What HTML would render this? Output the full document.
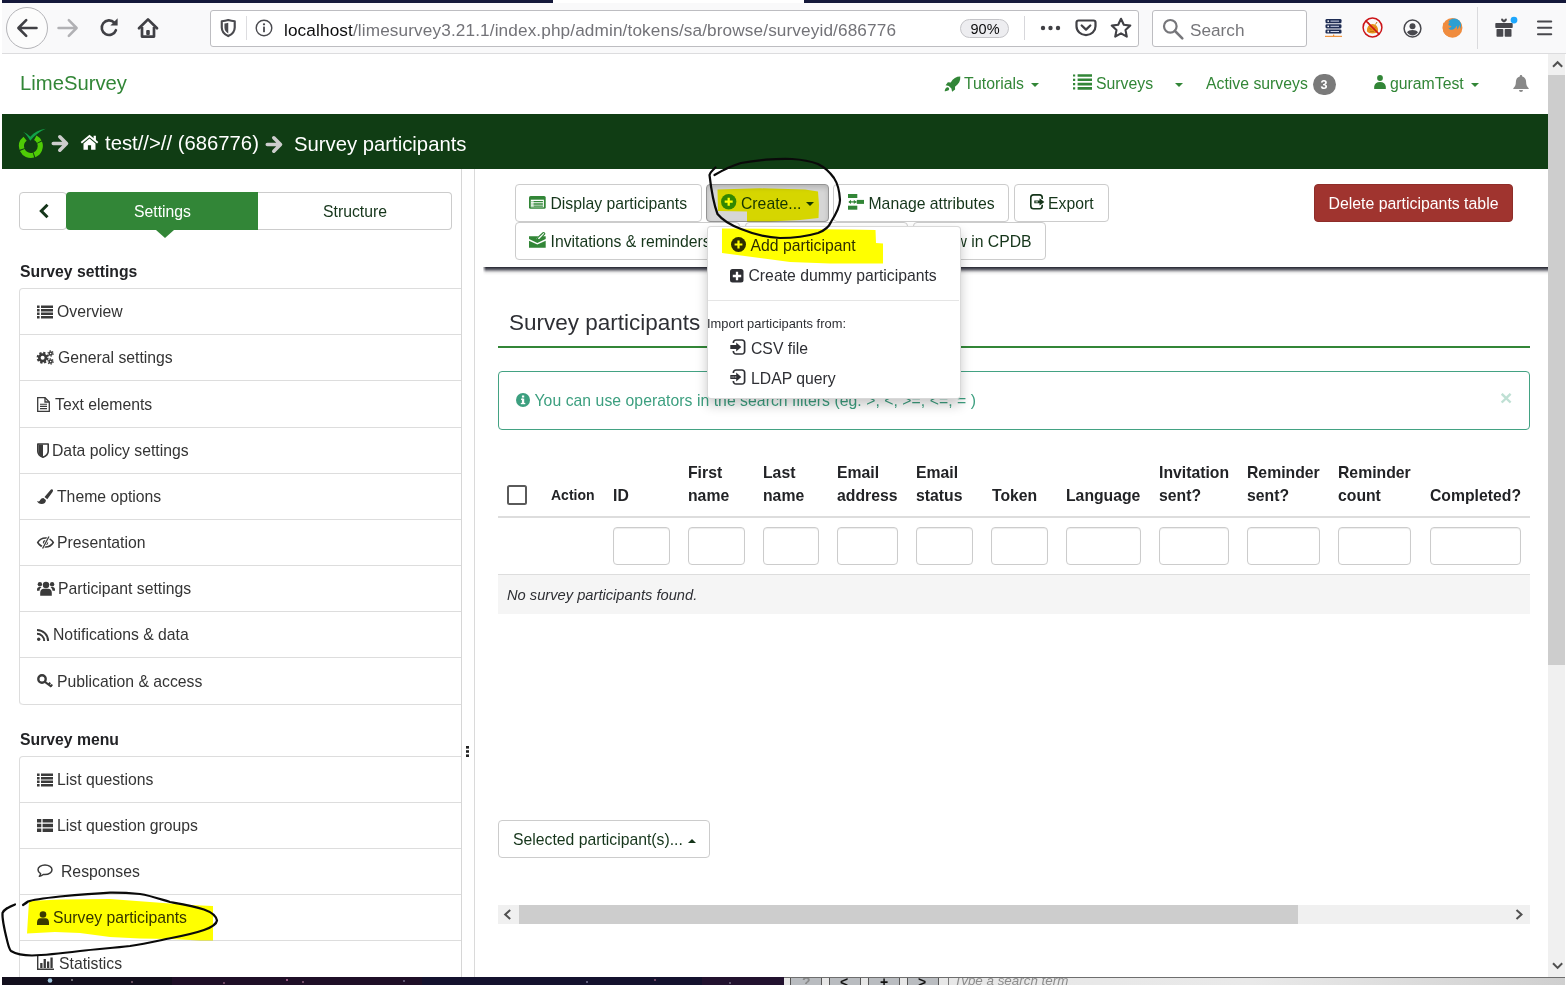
<!DOCTYPE html>
<html lang="en">
<head>
<meta charset="utf-8">
<title>LimeSurvey - Survey participants</title>
<style>
*{box-sizing:border-box;margin:0;padding:0}
html,body{width:1566px;height:986px;overflow:hidden;background:#fff}
body{font-family:"Liberation Sans",Arial,sans-serif;font-size:15.75px;color:#2b2d36;position:relative}
.abs{position:absolute}
svg{display:block;overflow:visible}
.t{position:absolute;white-space:nowrap;line-height:1}
/* browser chrome */
#tabstrip1{left:2px;top:0;width:551px;height:3px;background:#14183a}
#tabstrip2{left:804px;top:0;width:762px;height:3px;background:#14183a}
#toolbar{left:0;top:3px;width:1566px;height:51px;background:#f9f9fa;border-bottom:1px solid #dcdcde}
#urlbar{left:210px;top:10px;width:929px;height:37px;background:#fff;border:1px solid #bdbdc1;border-radius:3px}
#searchbar{left:1152px;top:10px;width:155px;height:37px;background:#fff;border:1px solid #bdbdc1;border-radius:3px}
.chrome-t{font-family:"Liberation Sans",sans-serif;font-size:17.2px}
/* page */
.green{color:#328637}
#greenbar{left:2px;top:114px;width:1546px;height:55px;background:#103d14}
.nav{font-size:15.8px;color:#328637}
.bc{font-size:20.3px;color:#fff}
/* sidebar */
#sidebar{left:2px;top:169px;width:460px;height:808px;background:#fff;border-right:1px solid #d6d6d6;overflow:hidden}
#handle{left:462px;top:169px;width:13px;height:808px;background:#fff;border-right:1px solid #dadada}
.lg{position:absolute;left:17px;width:460px;border:1px solid #ddd;border-bottom:0;border-radius:4px;background:#fff}
.li{position:relative;height:46.19px;border-bottom:1px solid #ddd;color:#343434}
.li:last-child{border-radius:0 0 0 4px}
.li .ic{position:absolute;left:17px;top:50%}
.li span{position:absolute;top:50%;margin-top:.5px;transform:translateY(-50%);white-space:nowrap;line-height:1}
.sh{position:absolute;left:18px;font-weight:700;font-size:15.75px;color:#222326;line-height:1;white-space:nowrap}
/* buttons */
.btn{position:absolute;height:38px;border:1px solid #ccc;border-radius:4px;background:#fff;color:#15351a;white-space:nowrap;font-size:15.75px;line-height:1}
.btn span{position:absolute;top:50%;transform:translateY(-50%);line-height:1}
/* table */
.th{position:absolute;font-weight:700;font-size:15.75px;line-height:23px;color:#222326;white-space:nowrap}
.fi{position:absolute;top:527px;height:38px;border:1px solid #ccc;border-radius:4px;background:#fff;box-shadow:inset 0 1px 1px rgba(0,0,0,.075)}
</style>
</head>
<body>
<!-- ===== BROWSER CHROME ===== -->
<div class="abs" id="tabstrip1"></div>
<div class="abs" id="tabstrip2"></div>
<div class="abs" id="toolbar"></div>
<div class="abs" id="urlbar"></div>
<div class="abs" id="searchbar"></div>
<!-- back -->
<div class="abs" style="left:6px;top:7px;width:42px;height:42px;border:1px solid #b4b4b8;border-radius:50%;background:#fcfcfc"></div>
<svg class="abs" style="left:16px;top:18px" width="22" height="20" viewBox="0 0 22 20"><path d="M20.5 10H2.5M10.2 2.2L2.4 10l7.8 7.8" fill="none" stroke="#404045" stroke-width="2.600" stroke-linecap="round" stroke-linejoin="round"/></svg>
<!-- forward -->
<svg class="abs" style="left:57px;top:18px" width="22" height="20" viewBox="0 0 22 20"><path d="M1.5 10h18M11.8 2.2l7.8 7.8-7.8 7.8" fill="none" stroke="#b1b1b4" stroke-width="2.500" stroke-linecap="round" stroke-linejoin="round"/></svg>
<!-- reload -->
<svg class="abs" style="left:99px;top:17px" width="21" height="21" viewBox="0 0 21 21"><path d="M16.9 13.2a7.3 7.3 0 1 1-1.6-7.6" fill="none" stroke="#404045" stroke-width="2.600" stroke-linecap="round"/><path d="M18.600 1.200v7.200h-7.200z" fill="#404045"/></svg>
<!-- home -->
<svg class="abs" style="left:137px;top:17px" width="22" height="22" viewBox="0 0 22 22"><path d="M2 11.2L11 2.4l9 8.8" fill="none" stroke="#404045" stroke-width="2.700" stroke-linecap="round" stroke-linejoin="round"/><path d="M5 10v9.600h12V10" fill="none" stroke="#404045" stroke-width="2.700" stroke-linejoin="round"/><rect x="9.2" y="13" width="3.6" height="5" rx="1" fill="#404045"/></svg>
<!-- shield -->
<svg class="abs" style="left:220px;top:19px" width="16.500" height="18.500" viewBox="0 0 15 18"><path d="M1.2 2.2c2.3-.2 4.4-.6 6.3-1.2 1.900.6 4 1 6.300 1.200v6c0 4-2.600 6.700-6.300 8.400C3.800 14.900 1.200 12.200 1.200 8.200z" fill="none" stroke="#4a4a4f" stroke-width="2.100" stroke-linejoin="round"/><path d="M7.500 3.600v10.400c-2.100-1.300-3.700-3-3.700-5.800V4.300c1.300-.1 2.500-.4 3.700-.7z" fill="#4a4a4f"/></svg>
<div class="abs" style="left:246px;top:16px;width:1px;height:24px;background:#dddde0"></div>
<!-- info -->
<svg class="abs" style="left:255px;top:19px" width="18" height="18" viewBox="0 0 18 18"><circle cx="9" cy="9" r="7.800" fill="none" stroke="#4a4a4f" stroke-width="1.400"/><rect x="8.100" y="7.600" width="1.800" height="5.600" fill="#4a4a4f"/><circle cx="9" cy="5.300" r="1.150" fill="#4a4a4f"/></svg>
<div class="t chrome-t" style="left:284px;top:21.500px;color:#0c0c0d;letter-spacing:.123px">localhost<span style="color:#737378">/limesurvey3.21.1/index.php/admin/tokens/sa/browse/surveyid/686776</span></div>
<!-- zoom pill -->
<div class="abs" style="left:960px;top:19px;width:49px;height:19px;border:1px solid #c4c4c8;border-radius:10px;background:#ededf0"></div>
<div class="t" style="left:970.500px;top:22px;font-size:14.500px;color:#0c0c0d">90%</div>
<div class="abs" style="left:1024px;top:16px;width:1px;height:24px;background:#d7d7db"></div>
<!-- dots -->
<svg class="abs" style="left:1040px;top:25px" width="21" height="6" viewBox="0 0 21 6"><circle cx="3" cy="3" r="2.200" fill="#404045"/><circle cx="10.500" cy="3" r="2.200" fill="#404045"/><circle cx="18" cy="3" r="2.200" fill="#404045"/></svg>
<!-- pocket -->
<svg class="abs" style="left:1075px;top:19.300px" width="22" height="18" viewBox="0 0 22 18"><path d="M3.500 1.500h15a2 2 0 0 1 2 2v3.800a9.500 8.800 0 0 1-19 0V3.500a2 2 0 0 1 2-2z" fill="none" stroke="#404045" stroke-width="2.200"/><path d="M6.700 6.500l4.300 4.100 4.300-4.100" fill="none" stroke="#404045" stroke-width="2.300" stroke-linecap="round" stroke-linejoin="round"/></svg>
<!-- star -->
<svg class="abs" style="left:1110px;top:17px" width="22" height="22" viewBox="0 0 22 22"><path d="M11 1.800l2.800 6 6.500.800-4.800 4.500 1.300 6.500L11 16.400l-5.800 3.200 1.300-6.500L1.700 8.600l6.500-.8z" fill="none" stroke="#404045" stroke-width="2.100" stroke-linejoin="round"/></svg>
<!-- search -->
<svg class="abs" style="left:1162px;top:18px" width="22" height="22" viewBox="0 0 22 22"><circle cx="8.300" cy="8.300" r="6.300" fill="none" stroke="#76767a" stroke-width="2.200"/><path d="M13 13l7.300 7.300" stroke="#76767a" stroke-width="2.600" stroke-linecap="round"/></svg>
<div class="t chrome-t" style="left:1190px;top:21.500px;color:#76767a">Search</div>
<!-- ext: server -->
<svg class="abs" style="left:1325px;top:18px" width="17" height="20" viewBox="0 0 17 20"><rect x=".5" y="1" width="16" height="4.200" rx="1.300" fill="#1f2d54"/><rect x=".5" y="6.200" width="16" height="4.200" rx="1.300" fill="#1f2d54"/><rect x=".5" y="11.400" width="16" height="4.200" rx="1.300" fill="#1f2d54"/><circle cx="3.200" cy="3.100" r=".9" fill="#fff"/><circle cx="3.200" cy="8.300" r=".9" fill="#fff"/><circle cx="3.200" cy="13.500" r=".9" fill="#fff"/><rect x="5.500" y="2.600" width="8.500" height="1" fill="#cfd6ea"/><rect x="5.500" y="7.800" width="8.500" height="1" fill="#cfd6ea"/><rect x="5.500" y="13" width="8.500" height="1" fill="#cfd6ea"/><rect x="0" y="17.800" width="17" height="1.100" fill="#f08a2c"/><rect x="8" y="16.600" width="1.200" height="1.500" fill="#f08a2c"/></svg>
<!-- ext: no-sign -->
<svg class="abs" style="left:1362.200px;top:17px" width="21" height="21" viewBox="0 0 21 21"><path d="M5 14.500c-.5-4.500 2-7.500 5.500-7.500s6 3 5.500 7.500c-1 1.300-3 2-5.500 2s-4.500-.7-5.500-2z" fill="#e8921c"/><path d="M7.500 7.500L6 5M13.500 7.500L15 5" stroke="#c9780f" stroke-width="1"/><path d="M7.500 11.500l2 1M13.500 10.500l-2 1.500M8 14.500h4" stroke="#b86c0c" stroke-width=".8" fill="none"/><circle cx="10.500" cy="10.500" r="9.400" fill="none" stroke="#cc1418" stroke-width="1.500"/><path d="M3.900 3.900l13.200 13.200" stroke="#cc1418" stroke-width="1.500"/></svg>
<!-- ext: account -->
<svg class="abs" style="left:1403px;top:18.600px" width="19" height="19" viewBox="0 0 19 19"><circle cx="9.500" cy="9.500" r="8.400" fill="none" stroke="#48484d" stroke-width="1.500"/><circle cx="9.500" cy="7.300" r="3" fill="#48484d"/><path d="M4 13.300c1.100-1.500 3-2.300 5.500-2.300s4.400.8 5.500 2.300c-1.300 2-3.200 3.100-5.500 3.100S5.300 15.300 4 13.300z" fill="#48484d"/></svg>
<!-- ext: firefox -->
<svg class="abs" style="left:1442.300px;top:16.800px" width="21" height="21" viewBox="0 0 21 21"><circle cx="10.500" cy="10.800" r="9.900" fill="#f08c3e"/><circle cx="12.300" cy="8.300" r="6.800" fill="#2c9fd2"/><path d="M1.500 5.500c.8.300 1.500 1 2 1.800 1.500-1.800 3-2.300 4.500-2-1.300.8-1.800 1.800-1.500 3 1 .500 2.300.3 3 1.300-.8 1.200-2 1.500-3.300 1.200.8 1.800 2.800 2.500 5 1.700 1.700-.7 2.800-2 3.200-3.700.8 1 .8 2.500.3 4 1.500-1 2.500-2.800 2.500-5 1.700 3 1.200 7-1.200 9.500-3 3-7.500 3.600-11 1.500C1 16.300-.3 11 1.500 5.500z" fill="#f08c3e"/></svg>
<div class="abs" style="left:1477px;top:7px;width:1px;height:42px;background:#dadadd"></div>
<!-- gift -->
<svg class="abs" style="left:1495px;top:16px" width="24" height="22" viewBox="0 0 24 22"><rect x=".3" y="7" width="17.400" height="5.100" rx=".8" fill="#48484d"/><rect x="1.500" y="13" width="6.800" height="7.700" rx=".8" fill="#48484d"/><rect x="9.700" y="13" width="6.800" height="7.700" rx=".8" fill="#48484d"/><path d="M9 6.600C6.800 5.500 5.500 4 6.300 3s2.200 0 2.700 1.500C9.500 3 11 2 11.700 3s-.5 2.500-2.700 3.600z" fill="#48484d"/><circle cx="19" cy="4.100" r="3.400" fill="#1ea7fd"/></svg>
<!-- hamburger -->
<svg class="abs" style="left:1535.500px;top:19px" width="17" height="18" viewBox="0 0 17 18"><path d="M2 2.500h13.200M2 8.800h13.200M2 15.200h13.200" stroke="#48484d" stroke-width="2.100" stroke-linecap="round"/></svg>

<div class="abs" id="leftedge" style="left:0;top:0;width:2px;height:986px;background:#fff"></div>

<!-- ===== PAGE HEADER ===== -->
<div class="t" style="left:20px;top:73px;font-size:20.25px;color:#328637">LimeSurvey</div>
<!-- Tutorials -->
<svg class="abs" style="left:944px;top:76px" width="17" height="16" viewBox="0 0 17 16"><path d="M16.300.500c.300 4.300-1.400 7.600-5.300 10.200l.100 2.800-3 2.300-.7-3.200-2.600-2.600-3.200-.7L3.900 6.300l2.800.1C9.200 2.300 12.200.500 16.300.500zM2.600 11.600c1-.6 2-.2 2.400.6.400.9 0 1.800-1 2.400-.8.500-2.300.7-3.300.7.100-1.100.500-2.700 1.900-3.700z" fill="#328637"/></svg>
<div class="t nav" style="left:964px;top:76px">Tutorials</div>
<svg class="abs" style="left:1031px;top:83px" width="8" height="4" viewBox="0 0 8 4"><path d="M0 0h8L4 4z" fill="#328637"/></svg>
<!-- Surveys -->
<svg class="abs" style="left:1072.800px;top:73.800px" width="19" height="16" viewBox="0 0 19 16"><path d="M0 .4h2.200v2.200H0zM4.600 .2H19v2.600H4.600zM0 4.700h2.200v2.200H0zM4.600 4.500H19v2.600H4.600zM0 9h2.200v2.200H0zM4.600 8.800H19v2.600H4.600zM0 13.300h2.200v2.200H0zM4.600 13.100H19v2.600H4.600z" fill="#328637"/></svg>
<div class="t nav" style="left:1096px;top:76px">Surveys</div>
<svg class="abs" style="left:1175px;top:83px" width="8" height="4" viewBox="0 0 8 4"><path d="M0 0h8L4 4z" fill="#328637"/></svg>
<div class="t nav" style="left:1206px;top:76px">Active surveys</div>
<div class="abs" style="left:1313px;top:73.800px;width:23.300px;height:21.200px;border-radius:10.600px;background:#7a7a7a"></div>
<div class="t" style="left:1320.500px;top:78.500px;font-size:12.600px;font-weight:700;color:#fff">3</div>
<!-- user -->
<svg class="abs" style="left:1373.500px;top:75px" width="12" height="14" viewBox="0 0 12 14"><circle cx="6" cy="3" r="2.900" fill="#328637"/><path d="M.2 14c0-.5-.1-1.300 0-2.400C.5 8.800 2.600 7 6 7s5.500 1.800 5.800 4.600c.1 1.100 0 1.900 0 2.400z" fill="#328637"/></svg>
<div class="t nav" style="left:1390px;top:76px">guramTest</div>
<svg class="abs" style="left:1471px;top:83px" width="8" height="4" viewBox="0 0 8 4"><path d="M0 0h8L4 4z" fill="#328637"/></svg>
<!-- bell -->
<svg class="abs" style="left:1513px;top:75px" width="16" height="17" viewBox="0 0 16 17"><path d="M8 0c.7 0 1.200.5 1.200 1.200v.4c2.400.6 3.900 2.600 3.900 5.200 0 3.500 1 5 2.600 6.400v.9H.3v-.9C1.900 11.800 2.900 10.300 2.900 6.800c0-2.600 1.500-4.600 3.900-5.200v-.4C6.800.5 7.300 0 8 0zM6 15h4a2 2 0 0 1-4 0z" fill="#888"/></svg>
<!-- green bar -->
<div class="abs" id="greenbar"></div>
<!-- logo -->
<svg class="abs" style="left:18px;top:127px" width="30" height="32" viewBox="0 0 30 32"><path d="M17.3 10.8A9.400 9.400 0 0 1 21.200 14.690M21.62 15.58A9.4 9.4 0 0 1 16.42 27.82M15.49 28.14A9.400 9.400 0 0 1 4.310 22.920M3.960 22A9.400 9.400 0 0 1 7.100 11.700" fill="none" stroke="#4fcb06" stroke-width="5.100"/><path d="M5 4.700c2.600 1.200 5 2.700 7.300 5C16 5.500 21 2.800 27.800 1.800 21.500 4.500 16 9 12.300 13.800 10.300 10 8 7 5 4.700z" fill="#12a149"/></svg>
<svg class="abs" style="left:51px;top:134px" width="19" height="19" viewBox="0 0 19 19"><path d="M2.300 9.500h12M8.800 2.800l6.700 6.700-6.700 6.700" fill="none" stroke="#cdcdcd" stroke-width="3.600" stroke-linecap="round" stroke-linejoin="round"/></svg>
<!-- home -->
<svg class="abs" style="left:80px;top:134px" width="19" height="17" viewBox="0 0 19 17"><path d="M1.300 8.700L9.500 1.900l8.200 6.800" fill="none" stroke="#fff" stroke-width="1.900" stroke-linejoin="miter"/><path d="M13.600 1.800h2.300v5l-2.300-2z" fill="#fff"/><path d="M9.500 4.400l6 5v6.400h-4.400v-4.500H7.900v4.500H3.500V9.400z" fill="#fff"/></svg>
<div class="t bc" style="left:105px;top:132.500px">test//&gt;// (686776)</div>
<svg class="abs" style="left:265px;top:135px" width="19" height="19" viewBox="0 0 19 19"><path d="M2.300 9.500h12M8.800 2.800l6.700 6.700-6.700 6.700" fill="none" stroke="#cdcdcd" stroke-width="3.600" stroke-linecap="round" stroke-linejoin="round"/></svg>
<div class="t bc" style="left:294px;top:133.500px">Survey participants</div>


<!-- ===== SIDEBAR ===== -->
<div class="abs" id="sidebar">
<div class="abs" style="left:17px;top:23px;width:48px;height:38px;border:1px solid #ccc;border-radius:4px;background:#fff"></div>
<svg class="abs" style="left:35.500px;top:34px" width="12" height="16" viewBox="0 0 12 16"><path d="M9.500 1.800L3.300 8l6.200 6.200" fill="none" stroke="#15351a" stroke-width="3"/></svg>
<div class="abs" style="left:256px;top:23px;width:194px;height:38px;border:1px solid #ccc;border-left:0;border-radius:0 4px 4px 0;background:#fff"></div>
<div class="abs" style="left:64px;top:23px;width:192px;height:38px;background:#328637;border-radius:4px 0 0 4px"></div>
<svg class="abs" style="left:154px;top:61px" width="18" height="8" viewBox="0 0 18 8"><path d="M0 0h18L9 8z" fill="#328637"/></svg>
<div class="t" style="left:132px;top:35px;color:#fff;font-size:15.75px">Settings</div>
<div class="t" style="left:321px;top:35px;color:#15351a;font-size:15.75px">Structure</div>
<div class="sh" style="top:95px">Survey settings</div>
<div class="lg" style="top:119px"><div class="li" style="height:46px"><div class="ic" style="left:17px;margin-top:-7px"><svg width="16" height="14" viewBox="0 0 16 14"><path d="M0 .6h2.600v2.300H0zM4 .6h12v2.300H4zM0 4.100h2.600v2.300H0zM4 4.100h12v2.300H4zM0 7.600h2.600v2.300H0zM4 7.600h12v2.300H4zM0 11.100h2.600v2.300H0zM4 11.100h12v2.300H4z" fill="#3a3a3a"/></svg></div><span style="left:37px">Overview</span></div><div class="li" style="height:46px"><div class="ic" style="left:17px;margin-top:-7.5px"><svg width="17" height="15" viewBox="0 0 17 15"><circle cx="5.600" cy="7.800" r="3.300" fill="none" stroke="#3a3a3a" stroke-width="2.600"/><circle cx="5.600" cy="7.800" r="5" fill="none" stroke="#3a3a3a" stroke-width="2" stroke-dasharray="2.200 1.730"/><circle cx="13.600" cy="3.500" r="1.500" fill="none" stroke="#3a3a3a" stroke-width="1.500"/><circle cx="13.600" cy="3.500" r="2.600" fill="none" stroke="#3a3a3a" stroke-width="1.200" stroke-dasharray="1.300 1.420"/><circle cx="13.600" cy="11.500" r="1.500" fill="none" stroke="#3a3a3a" stroke-width="1.500"/><circle cx="13.600" cy="11.500" r="2.600" fill="none" stroke="#3a3a3a" stroke-width="1.200" stroke-dasharray="1.300 1.420"/></svg></div><span style="left:38px">General settings</span></div><div class="li" style="height:47px"><div class="ic" style="left:17px;margin-top:-7.5px"><svg width="13" height="15" viewBox="0 0 13 15"><path d="M.7.700h7.300l4.300 4.300v9.300H.7z" fill="none" stroke="#3a3a3a" stroke-width="1.300"/><path d="M8 .7v4.300h4.300" fill="none" stroke="#3a3a3a" stroke-width="1.300"/><path d="M3 7.200h7M3 9.400h7M3 11.600h7" stroke="#3a3a3a" stroke-width="1.100"/></svg></div><span style="left:35px">Text elements</span></div><div class="li" style="height:46px"><div class="ic" style="left:17px;margin-top:-7.5px"><svg width="12" height="15" viewBox="0 0 12 15"><path d="M.8 1h10.400v7.200c0 3-2.400 4.900-5.200 6.100C3.200 13.100.8 11.200.8 8.200z" fill="none" stroke="#3a3a3a" stroke-width="1.600" stroke-linejoin="round"/><path d="M6 1.500v12.300C3.500 12.700 1.500 11 1.500 8.200V1.500z" fill="#3a3a3a"/></svg></div><span style="left:32px">Data policy settings</span></div><div class="li" style="height:46px"><div class="ic" style="left:17px;margin-top:-7.5px"><svg width="16" height="15" viewBox="0 0 16 15"><path d="M14.700.2c.8 0 1.300.6 1.300 1.300 0 .5-.2.900-.5 1.400L10.300 10.200 7.500 8 13.500.9c.3-.4.700-.7 1.200-.7zM6.400 8.900l2.500 2c.1 2.400-1.700 4-4.300 4C2.400 14.900.8 14 0 11.900c.5.300 1.100.5 1.600.5C3.300 12.400 3 9 6.400 8.900z" fill="#3a3a3a"/></svg></div><span style="left:37px">Theme options</span></div><div class="li" style="height:46px"><div class="ic" style="left:17px;margin-top:-6.5px"><svg width="17" height="13" viewBox="0 0 17 13"><path d="M.7 6.500C2.500 3.500 5.200 2 8.500 2s6 1.500 7.800 4.500C14.500 9.500 11.800 11 8.500 11S2.500 9.500.7 6.500z" fill="none" stroke="#3a3a3a" stroke-width="1.500"/><circle cx="8.500" cy="6.500" r="2.600" fill="#3a3a3a"/><path d="M12.300.4L5.300 12.600" stroke="#fff" stroke-width="3"/><path d="M12 .5L5.600 12.500" stroke="#3a3a3a" stroke-width="1.300"/></svg></div><span style="left:37px">Presentation</span></div><div class="li" style="height:46px"><div class="ic" style="left:17px;margin-top:-7.5px"><svg width="18" height="15" viewBox="0 0 18 15"><circle cx="9" cy="4" r="3.200" fill="#3a3a3a"/><path d="M3.200 14.800v-3c0-2.500 1.600-4 3.600-4h4.400c2 0 3.600 1.500 3.600 4v3z" fill="#3a3a3a"/><circle cx="2.900" cy="3.300" r="2.200" fill="#3a3a3a"/><circle cx="15.100" cy="3.300" r="2.200" fill="#3a3a3a"/><path d="M0 9.800V8.500c0-1.600 1-2.600 2.300-2.600h2.200c-.9.900-1.900 2-2 3.900zM18 9.800V8.500c0-1.600-1-2.600-2.300-2.600h-2.200c.9.900 1.900 2 2 3.900z" fill="#3a3a3a"/></svg></div><span style="left:38px">Participant settings</span></div><div class="li" style="height:46px"><div class="ic" style="left:17px;margin-top:-5.5px"><svg width="12" height="12" viewBox="0 0 12 12"><circle cx="1.700" cy="10.300" r="1.700" fill="#3a3a3a"/><path d="M0 4.800a7.200 7.200 0 0 1 7.200 7.200M0 .9A11.100 11.100 0 0 1 11.100 12" fill="none" stroke="#3a3a3a" stroke-width="2"/></svg></div><span style="left:33px">Notifications &amp; data</span></div><div class="li" style="height:47px"><div class="ic" style="left:17px;margin-top:-7px"><svg width="16" height="14" viewBox="0 0 16 14"><circle cx="5" cy="5" r="3.700" fill="none" stroke="#3a3a3a" stroke-width="2.400"/><path d="M7.600 7.600l6.800 5.200M11.600 10.600l1.600-2M13.800 12.300l1.400-1.800" fill="none" stroke="#3a3a3a" stroke-width="2"/></svg></div><span style="left:37px">Publication &amp; access</span></div></div>
<div class="sh" style="top:562.500px">Survey menu</div>
<div class="lg" style="top:587px"><div class="li" style="height:46px"><div class="ic" style="left:17px;margin-top:-7px"><svg width="16" height="14" viewBox="0 0 16 14"><path d="M0 .6h2.600v2.300H0zM4 .6h12v2.300H4zM0 4.100h2.600v2.300H0zM4 4.100h12v2.300H4zM0 7.600h2.600v2.300H0zM4 7.600h12v2.300H4zM0 11.100h2.600v2.300H0zM4 11.100h12v2.300H4z" fill="#3a3a3a"/></svg></div><span style="left:37px">List questions</span></div><div class="li" style="height:46px"><div class="ic" style="left:17px;margin-top:-6.5px"><svg width="16" height="13" viewBox="0 0 16 13"><path d="M0 0h4.300v3.500H0zM5.600 0H16v3.500H5.600zM0 4.700h4.300v3.500H0zM5.600 4.700H16v3.500H5.600zM0 9.400h4.300v3.500H0zM5.600 9.400H16v3.500H5.600z" fill="#3a3a3a"/></svg></div><span style="left:37px">List question groups</span></div><div class="li" style="height:46px"><div class="ic" style="left:17px;margin-top:-7.5px"><svg width="16" height="14" viewBox="0 0 16 14"><path d="M8 1c3.900 0 7 2.100 7 4.800s-3.100 4.800-7 4.800c-.6 0-1.200 0-1.700-.1-1 .9-2.300 1.600-3.900 1.800.7-.8 1.100-1.600 1.200-2.600C2 8.800 1 7.400 1 5.800 1 3.100 4.100 1 8 1z" fill="none" stroke="#3a3a3a" stroke-width="1.500" stroke-linejoin="round"/></svg></div><span style="left:41px">Responses</span></div><div class="li" style="height:46px"><div class="ic" style="left:17px;margin-top:-7px"><svg width="12" height="14" viewBox="0 0 12 14"><circle cx="6" cy="3.500" r="3.300" fill="#3a3a3a"/><path d="M0 14v-2.500c0-2.800 1.500-4.300 3.300-4.300h5.400c1.800 0 3.300 1.500 3.300 4.300V14z" fill="#3a3a3a"/></svg></div><span style="left:33px">Survey participants</span></div><div class="li" style="height:46px"><div class="ic" style="left:17px;margin-top:-7.5px"><svg width="17" height="14" viewBox="0 0 17 14"><path d="M.7 0v13.300H17" fill="none" stroke="#3a3a3a" stroke-width="1.400"/><path d="M3.200 7h2.300v5H3.200zM6.600 3h2.300v9H6.600zM10 5.500h2.300V12H10zM13.400 1.500h2.300V12h-2.300z" fill="#3a3a3a"/></svg></div><span style="left:39px">Statistics</span></div></div>
</div>
<div class="abs" id="handle"></div>
<svg class="abs" style="left:466px;top:746px" width="3" height="11" viewBox="0 0 3 11"><rect x="0" y="0" width="3" height="2.600" fill="#222"/><rect x="0" y="4.200" width="3" height="2.600" fill="#222"/><rect x="0" y="8.400" width="3" height="2.600" fill="#222"/></svg>


<!-- ===== MAIN ===== -->
<!-- menubar -->
<div class="abs" style="left:483px;top:267px;width:1065px;height:8px;background:linear-gradient(to bottom,#30313b 0px 1px,#4a4b55 1px 2px,#696a73 2px 3px,#99999f 3px 4px,#c4c4c7 4px 5px,#e5e5e6 5px 6px,#f5f5f5 6px 7px,#fbfbfb 7px 8px)"></div><div class="abs" style="left:481px;top:266px;width:5px;height:10px;background:linear-gradient(to right,#fff 30%,rgba(255,255,255,0))"></div>
<!-- row1 buttons -->
<div class="btn" style="left:515px;top:184px;width:187px"></div>
<svg class="abs" style="left:529px;top:196px" width="17" height="13" viewBox="0 0 17 13"><rect x="0" y="0" width="16.700" height="12.800" rx="1.600" fill="#328637"/><rect x="1.800" y="3.700" width="13.100" height="7.600" fill="#fff"/><path d="M4.400 5.700h9.500M4.400 8h9.500M4.400 10.200h9.500" stroke="#328637" stroke-width="1.300"/><path d="M2.500 5.700h1M2.500 8h1M2.500 10.200h1" stroke="#328637" stroke-width="1"/></svg>
<div class="t" style="left:550.500px;top:195.700px;color:#15351a">Display participants</div>

<div class="btn" style="left:706px;top:184px;width:123px;background:#d6d6d6;border-color:#949494;box-shadow:inset 0 3px 5px rgba(0,0,0,.14)"></div>
<svg class="abs" style="left:721.300px;top:194px" width="15.400" height="15.400" viewBox="0 0 15 15"><circle cx="7.500" cy="7.500" r="7.500" fill="#328637"/><path d="M7.500 3.600v7.800M3.600 7.500h7.800" stroke="#fff" stroke-width="2.200"/></svg>
<div class="t" style="left:741px;top:195.700px;color:#15351a">Create...</div>
<svg class="abs" style="left:806px;top:202px" width="8" height="4" viewBox="0 0 8 4"><path d="M0 0h8L4 4z" fill="#15351a"/></svg>

<div class="btn" style="left:833px;top:184px;width:176px"></div>
<svg class="abs" style="left:847.700px;top:194px" width="16" height="16" viewBox="0 0 16 16"><rect x="0" y="0" width="9.300" height="4" fill="#328637"/><rect x="0" y="11.700" width="9.300" height="4" fill="#328637"/><rect x="8.800" y="5.900" width="7.200" height="4" fill="#328637"/><path d="M1 7.900h7.500" stroke="#328637" stroke-width="1.300"/><path d="M3 5.700L.3 7.900 3 10.100zM5.800 5.700l2.700 2.200-2.700 2.200z" fill="#328637"/></svg>
<div class="t" style="left:868.500px;top:195.700px;color:#15351a">Manage attributes</div>

<div class="btn" style="left:1014px;top:184px;width:95px"></div>
<svg class="abs" style="left:1030px;top:194px" width="15" height="16" viewBox="0 0 15 16"><path d="M12.200 5V3.600A2.700 2.700 0 0 0 9.500.900H3.500A2.700 2.700 0 0 0 .800 3.600v8.500a2.700 2.700 0 0 0 2.700 2.700h6a2.700 2.700 0 0 0 2.700-2.700v-1.300" fill="none" stroke="#15351a" stroke-width="1.600"/><path d="M4.300 6.500h5.200V4.300l4.900 3.600-4.900 3.600V9.300H4.300z" fill="#15351a"/><path d="M5.500 7.900h2.400" stroke="#fff" stroke-width=".9"/></svg>
<div class="t" style="left:1048px;top:195.700px;color:#15351a">Export</div>

<!-- row2 buttons -->
<div class="btn" style="left:515px;top:222px;width:225px"></div>
<svg class="abs" style="left:529px;top:232px" width="17" height="16" viewBox="0 0 17 16"><path d="M0 4.200h9.200l-1.500 2 .2 1.300 1.500-.2 3.800-3.100h3.500V7L8.300 11 0 7z" fill="#328637"/><path d="M0 8.700l8.300 3.900 8.400-3.900v7.100H0z" fill="#328637"/><path d="M14 .700c.9-.6 2.200.500 1.600 1.500L10.700 7.300l-2.500.7.600-2.500z" fill="#fff" stroke="#328637" stroke-width="1.200"/></svg>
<div class="t" style="left:550.500px;top:233.700px;color:#15351a">Invitations &amp; reminders</div>
<svg class="abs" style="left:722px;top:240px" width="8" height="4" viewBox="0 0 8 4"><path d="M0 0h8L4 4z" fill="#15351a"/></svg>
<div class="btn" style="left:745px;top:222px;width:163px"></div>
<div class="t" style="left:781px;top:233.700px;color:#15351a">Generate tokens</div>
<div class="btn" style="left:913px;top:222px;width:133px"></div>
<div class="t" style="left:933px;top:233.700px;color:#15351a">View in CPDB</div>

<!-- delete -->
<div class="abs" style="left:1314px;top:184px;width:199px;height:38px;background:#a0342f;border:1px solid #8e2d29;border-radius:4px"></div>
<div class="t" style="left:1328.500px;top:195.700px;color:#fff;font-size:15.850px">Delete participants table</div>

<!-- heading -->
<div class="t" style="left:509px;top:311.600px;font-size:22.500px;color:#2e2f34">Survey participants</div>
<div class="abs" style="left:498px;top:346px;width:1032px;height:2px;background:#328637"></div>

<!-- alert -->
<div class="abs" style="left:498px;top:371px;width:1032px;height:59px;border:1px solid #43a283;border-radius:4px;background:#fff"></div>
<svg class="abs" style="left:516px;top:393px" width="14" height="14" viewBox="0 0 14 14"><circle cx="7" cy="7" r="7" fill="#3c9f7f"/><rect x="5.900" y="5.600" width="2.300" height="5" fill="#fff"/><rect x="5" y="5.600" width="2" height="1.300" fill="#fff"/><rect x="4.800" y="9.900" width="4.500" height="1.300" fill="#fff"/><rect x="5.900" y="2.500" width="2.300" height="2" fill="#fff"/></svg>
<div class="t" style="left:534.500px;top:392.900px;color:#3c9f7f;letter-spacing:.045px">You can use operators in the search filters (eg: &gt;, &lt;, &gt;=, &lt;=, = )</div>
<div class="t" style="left:1500px;top:387px;color:#bfe0d4;font-size:21px;font-weight:700">×</div>

<!-- table header -->
<div class="abs" style="left:507.200px;top:485.300px;width:20px;height:20px;border:2px solid #5a5a5a;border-radius:2.500px;background:#fff"></div>
<div class="th" style="left:551px;top:484px;font-size:14px">Action</div>
<div class="th" style="left:613px;top:484px">ID</div>
<div class="th" style="left:688px;top:461px">First<br>name</div>
<div class="th" style="left:763px;top:461px">Last<br>name</div>
<div class="th" style="left:837px;top:461px">Email<br>address</div>
<div class="th" style="left:916px;top:461px">Email<br>status</div>
<div class="th" style="left:992px;top:484px">Token</div>
<div class="th" style="left:1066px;top:484px">Language</div>
<div class="th" style="left:1159px;top:461px">Invitation<br>sent?</div>
<div class="th" style="left:1247px;top:461px">Reminder<br>sent?</div>
<div class="th" style="left:1338px;top:461px">Reminder<br>count</div>
<div class="th" style="left:1430px;top:484px">Completed?</div>
<div class="abs" style="left:498px;top:516px;width:1032px;height:2px;background:#ddd"></div>
<!-- filter inputs -->
<div class="fi" style="left:613px;width:57px"></div>
<div class="fi" style="left:688px;width:57px"></div>
<div class="fi" style="left:763px;width:56px"></div>
<div class="fi" style="left:837px;width:61px"></div>
<div class="fi" style="left:916px;width:57px"></div>
<div class="fi" style="left:991px;width:57px"></div>
<div class="fi" style="left:1066px;width:75px"></div>
<div class="fi" style="left:1159px;width:70px"></div>
<div class="fi" style="left:1247px;width:73px"></div>
<div class="fi" style="left:1338px;width:73px"></div>
<div class="fi" style="left:1430px;width:91px"></div>
<div class="abs" style="left:498px;top:574px;width:1032px;height:1px;background:#ddd"></div>
<div class="abs" style="left:498px;top:575px;width:1032px;height:39px;background:#f5f5f5"></div>
<div class="t" style="left:507px;top:587.800px;font-style:italic;font-size:14.700px;color:#2e2f34">No survey participants found.</div>

<!-- selected participants -->
<div class="btn" style="left:498px;top:820px;width:212px"></div>
<div class="t" style="left:513px;top:831.700px;color:#15351a">Selected participant(s)...</div>
<svg class="abs" style="left:688px;top:838.800px" width="8" height="4" viewBox="0 0 8 4"><path d="M0 4h8L4 0z" fill="#15351a"/></svg>

<!-- dropdown menu -->
<div class="abs" style="left:707px;top:226px;width:254px;height:173px;background:#fff;border:1px solid rgba(0,0,0,.15);border-radius:4px;box-shadow:0 6px 12px rgba(0,0,0,.22)"></div>
<svg class="abs" style="left:730.500px;top:236.700px" width="15" height="15" viewBox="0 0 15 15"><circle cx="7.500" cy="7.500" r="7.500" fill="#2e2f34"/><path d="M7.500 3.600v7.800M3.600 7.500h7.800" stroke="#fff" stroke-width="2.200"/></svg>
<div class="t" style="left:750.500px;top:237.600px;color:#2e2f34">Add participant</div>
<svg class="abs" style="left:730px;top:268.500px" width="14" height="14" viewBox="0 0 14 14"><rect x="0" y="0" width="13.500" height="13.400" rx="2.500" fill="#2e2f34"/><path d="M7 2.800v8.400M2.800 7h8.400" stroke="#fff" stroke-width="2.300"/></svg>
<div class="t" style="left:748.500px;top:267.800px;color:#2e2f34">Create dummy participants</div>
<div class="abs" style="left:708px;top:300px;width:251px;height:1px;background:#e5e5e5"></div>
<div class="t" style="left:707px;top:317.600px;font-size:12.900px;color:#2e2f34">Import participants from:</div>
<svg class="abs" style="left:730px;top:338.700px" width="16" height="16" viewBox="0 0 16 16"><path d="M3.400 4V3.600A2.600 2.600 0 0 1 6 1h6a2.600 2.600 0 0 1 2.600 2.600v8.800A2.600 2.600 0 0 1 12 15H6a2.600 2.600 0 0 1-2.600-2.600V12" fill="none" stroke="#2e2f34" stroke-width="1.700"/><path d="M.3 5.900h5.900V3.400L11.300 8l-5.100 4.600v-2.500H.3z" fill="#2e2f34"/></svg>
<div class="t" style="left:751px;top:340.900px;color:#2e2f34">CSV file</div>
<svg class="abs" style="left:730px;top:368.500px" width="16" height="16" viewBox="0 0 16 16"><path d="M3.400 4V3.600A2.600 2.600 0 0 1 6 1h6a2.600 2.600 0 0 1 2.600 2.600v8.800A2.600 2.600 0 0 1 12 15H6a2.600 2.600 0 0 1-2.600-2.600V12" fill="none" stroke="#2e2f34" stroke-width="1.700"/><path d="M.3 5.900h5.900V3.400L11.300 8l-5.100 4.600v-2.500H.3z" fill="#2e2f34"/><path d="M1.500 8h5.500" stroke="#fff" stroke-width=".9" stroke-dasharray="1.100 .7"/></svg>
<div class="t" style="left:751px;top:370.500px;color:#2e2f34">LDAP query</div>


<!-- ===== SCROLLBARS / BOTTOM ===== -->
<!-- horizontal scrollbar -->
<div class="abs" style="left:498px;top:905px;width:1032px;height:19px;background:#f0f0f0"></div>
<div class="abs" style="left:519px;top:905px;width:778.500px;height:19px;background:#cdcdcd"></div>
<svg class="abs" style="left:503px;top:909px" width="9" height="11" viewBox="0 0 9 11"><path d="M7.200 1L2.200 5.500l5 4.500" fill="none" stroke="#505050" stroke-width="2"/></svg>
<svg class="abs" style="left:1515px;top:909px" width="9" height="11" viewBox="0 0 9 11"><path d="M1.500 1l5 4.500-5 4.500" fill="none" stroke="#505050" stroke-width="2"/></svg>
<!-- vertical scrollbar -->
<div class="abs" style="left:1548px;top:54px;width:17px;height:923px;background:#f0f0f0"></div>
<div class="abs" style="left:1548px;top:75px;width:17px;height:590px;background:#cdcdcd"></div>
<svg class="abs" style="left:1552px;top:60px" width="11" height="8" viewBox="0 0 11 8"><path d="M1 6.800l4.600-4.600 4.600 4.600" fill="none" stroke="#505050" stroke-width="2"/></svg>
<svg class="abs" style="left:1552px;top:962px" width="11" height="8" viewBox="0 0 11 8"><path d="M1 1.300l4.600 4.600 4.600-4.600" fill="none" stroke="#505050" stroke-width="2"/></svg>
<!-- bottom strip (window behind) -->
<div class="abs" style="left:2px;top:977px;width:782px;height:8px;overflow:hidden">
<svg width="782" height="8" viewBox="0 0 782 8"><rect width="782" height="8" fill="#130f1d"/><rect x="170" y="0" width="250" height="8" fill="#2a1030" opacity=".55"/><rect x="420" y="0" width="362" height="8" fill="#161436" opacity=".7"/><rect x="700" y="0" width="82" height="8" fill="#2c1230" opacity=".6"/><circle cx="48" cy="3.500" r="2.300" fill="#9fc4dc"/><circle cx="70" cy="3" r=".8" fill="#ddd"/><circle cx="130" cy="5" r=".8" fill="#c9a"/><circle cx="222" cy="6" r=".8" fill="#c8a"/><circle cx="285" cy="3" r=".9" fill="#c7a"/><circle cx="301" cy="5" r=".8" fill="#d9b"/><circle cx="402" cy="4" r=".8" fill="#aac"/><circle cx="585" cy="5" r=".8" fill="#bbd"/><circle cx="653" cy="3" r=".8" fill="#d8a"/><circle cx="728" cy="6" r=".8" fill="#aab"/></svg>
</div>
<div class="abs" style="left:784px;top:977px;width:781px;height:8px;background:linear-gradient(to right,#e6e6e6 0,#e9e9e9 60%,#cfcfcf 100%);border-top:1px solid #6e6e6e;overflow:hidden">
<div class="abs" style="left:6px;top:0;width:32px;height:9px;background:#b9bcc0;border-left:1px solid #555;border-right:1px solid #555"></div>
<div class="abs" style="left:45px;top:0;width:32px;height:9px;background:#b9bcc0;border-left:1px solid #555;border-right:1px solid #555"></div>
<div class="abs" style="left:84px;top:0;width:32px;height:9px;background:#b9bcc0;border-left:1px solid #555;border-right:1px solid #555"></div>
<div class="abs" style="left:123px;top:0;width:32px;height:9px;background:#b9bcc0;border-left:1px solid #555;border-right:1px solid #555"></div>
<div class="t" style="left:18px;top:-3.500px;font-size:14px;font-weight:700;color:#8a8a8a">?</div>
<div class="t" style="left:56px;top:-3.500px;font-size:14px;font-weight:700;color:#111">&lt;</div>
<div class="t" style="left:96px;top:-3.500px;font-size:14px;font-weight:700;color:#111">+</div>
<div class="t" style="left:134px;top:-3.500px;font-size:14px;font-weight:700;color:#111">&gt;</div>
<div class="abs" style="left:164px;top:0;width:1px;height:9px;background:#777"></div>
<div class="t" style="left:170px;top:-4.500px;font-size:13.400px;font-style:italic;color:#8c8c8c">Type a search term</div>
</div>


<!-- ===== ANNOTATIONS ===== -->
<svg class="abs" style="left:0;top:0;mix-blend-mode:multiply;pointer-events:none" width="1566" height="986" viewBox="0 0 1566 986">
<!-- highlighter strokes -->
<path d="M717.500 189.500L760 188.300 805 189.500 818 191.500 819 205 818.500 218 800 220 770 221.500 747 221.500 747 211.500 718 211z" fill="#ffff00"/>
<path d="M722 228.500L790 229 850 229.500 875.500 230 876 243 883 243.500 883 263.500 830 263.500 790 262 760 258 722 253z" fill="#ffff00"/>
<path d="M29 901L60 899.500 110 899 150 902 190 905 213 906 213 940.500 200 940.500 170 939 140 938.500 110 937 80 933 55 932 27 933.500z" fill="#ffff00"/>
</svg>
<svg class="abs" style="left:0;top:0;pointer-events:none" width="1566" height="986" viewBox="0 0 1566 986">
<!-- pen loops -->
<path d="M715.500 167.500C712 171 710 172 709.500 175 711 188 713 202 717.500 214 724 222 733 226 741 229 753 234 766 237.500 780 238 794 238 808 236 818 233 826 230 829 227 831 222 836 214 840 207 840 200 839.500 191 838 184 834 178 829 171 824 167 818 164 810 161 801 159.500 792 159 783 158.500 775 159 766 159.700 757 160.500 749 161.500 741 163 732 165.500 724 169.500 714.500 175" fill="none" stroke="#0a0a0a" stroke-width="2.200" stroke-linecap="round" stroke-linejoin="round"/>
<path d="M15 904.500C9 907 4 909 2.500 913 2 920 5 932 7 940 8.500 946 9 949 11 951 16 954 24 955.500 32 955.500 48 955 64 953 80 951 97 949 113 948 130 946 144 944 157 941 169 938.500 182 936 194 933.500 204 930 211 927.500 216.500 924 217 920.500 216 915 211 912 204 909.500 193 906 181 904 170 902 160 899 150 895.500 140 894 130 893 120 892.500 110 892.600 93 893.500 76 895 60 896.500 46 898 33 899.500 28 901.500 26 903 24.500 904 23 905" fill="none" stroke="#0a0a0a" stroke-width="2.200" stroke-linecap="round" stroke-linejoin="round"/>
</svg>

</body>
</html>
